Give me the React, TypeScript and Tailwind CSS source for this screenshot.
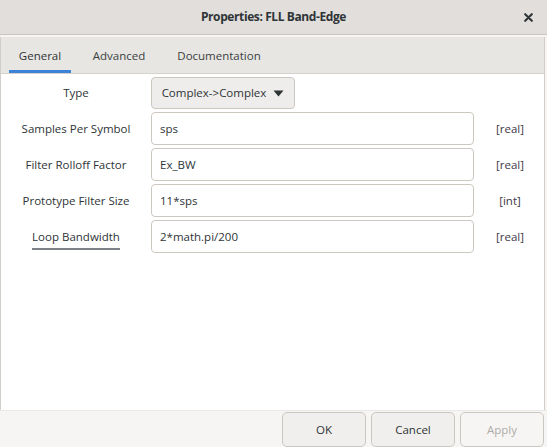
import React from "react";

const rows = [
  { label: "Samples Per Symbol", value: "sps", kind: "[real]" },
  { label: "Filter Rolloff Factor", value: "Ex_BW", kind: "[real]" },
  { label: "Prototype Filter Size", value: "11*sps", kind: "[int]" },
  { label: "Loop Bandwidth", value: "2*math.pi/200", kind: "[real]", underline: true },
];

export default function App() {
  return (
    <div className="w-[547px] h-[447px] bg-[#f6f5f4] flex flex-col font-['Open_Sans',sans-serif] text-[11.5px] text-[#2e3436] overflow-hidden">
      <div className="relative h-[35px] shrink-0 bg-[#e1dedb] border-b border-[#c9c6c2] flex items-center justify-center">
        <span className="text-[12px] font-bold tracking-[-0.4px] text-[#2e3436]">Properties: FLL Band-Edge</span>
        <svg className="absolute right-[14px] top-[13px]" width="9" height="9" viewBox="0 0 9 9">
          <path d="M1.2 1.2 L7.8 7.8 M7.8 1.2 L1.2 7.8" stroke="#2e3436" strokeWidth="2.1" strokeLinecap="round" />
        </svg>
      </div>

      <div className="mt-[2px] w-[545px] flex-1 flex flex-col border-x border-[#d2cfcb] bg-white">
        <div className="h-[37px] shrink-0 bg-[#e8e6e3] border-b border-[#d5d2ce] flex items-end pl-[8px]">
          <div className="h-full flex flex-col justify-between items-center w-[62px]">
            <span className="mt-[10px] text-[#2e3436]">General</span>
            <div className="h-[3px] w-full bg-[#3b83d9]" />
          </div>
          <div className="h-full w-[60px] ml-[18px] flex justify-center pt-[10px] text-[#3a3f41]">Advanced</div>
          <div className="h-full w-[80px] ml-[30px] flex justify-center pt-[10px] text-[#3a3f41]">Documentation</div>
        </div>

        <div className="flex-1 flex flex-col gap-[3px] pt-[3px]">
          <div className="flex items-center h-[32px]">
            <div className="w-[150px] text-center">Type</div>
            <button className="h-[32px] w-[144px] rounded-[4px] border border-[#cdc7c2] bg-[#eeedeb] flex items-center justify-center gap-[7px] text-[#2e3436]">
              <span>Complex-&gt;Complex</span>
              <svg width="11" height="7" viewBox="0 0 11 7">
                <path d="M0.5 0.5 L10.5 0.5 L5.5 6.5 Z" fill="#2e3436" />
              </svg>
            </button>
          </div>
          {rows.map((r) => (
            <div key={r.label} className="flex items-center h-[33px]">
              <div className="w-[150px] flex justify-center">
                {r.underline ? (
                  <span className="border-b-2 border-[#7d8187] leading-[18px] pb-[2px] mt-[4px]">{r.label}</span>
                ) : (
                  <span>{r.label}</span>
                )}
              </div>
              <div className="w-[323px] h-[33px] rounded-[4px] border border-[#cdc7c2] bg-white flex items-center px-[8px]">
                {r.value}
              </div>
              <div className="flex-1 text-center text-[#3d3846] pl-[2px]">{r.kind}</div>
            </div>
          ))}
        </div>
      </div>

      <div className="h-[37px] shrink-0 bg-[#f6f5f4] border-t border-[#ebe9e7] flex items-start justify-end gap-[5px] pr-[3px] pt-[1px]">
        {["OK", "Cancel", "Apply"].map((b) => (
          <button
            key={b}
            className={`w-[84px] h-[35px] rounded-[5px] border border-[#cdc7c2] ${b === "Apply" ? "text-[#aeaba7] bg-[#f6f5f4]" : "text-[#2e3436] bg-[#f0efed]"}`}
          >
            {b}
          </button>
        ))}
      </div>
    </div>
  );
}
